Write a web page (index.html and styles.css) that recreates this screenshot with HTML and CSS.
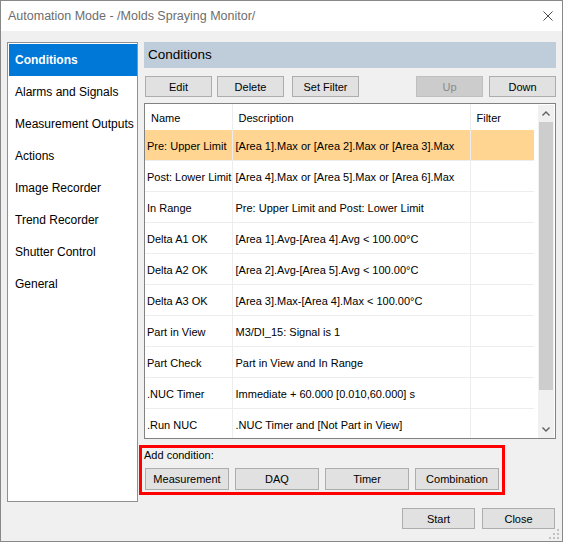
FILE: index.html
```html
<!DOCTYPE html>
<html lang="en">
<head>
    <meta charset="UTF-8">
    <title>Automation Mode - /Molds Spraying Monitor/</title>
    <link rel="stylesheet" href="styles.css">
</head>
<body>
<div class="window">
    <div class="titlebar">
        <span class="title">Automation Mode - /Molds Spraying Monitor/</span>
        <svg class="close" width="10" height="10" viewBox="0 0 10 10">
            <path d="M0.5 0.5 L9.5 9.5 M9.5 0.5 L0.5 9.5" stroke="#4a4a4a" stroke-width="1" fill="none"/>
        </svg>
    </div>

    <div class="main">
        <div class="nav">
            <div class="nav-item selected">Conditions</div>
            <div class="nav-item">Alarms and Signals</div>
            <div class="nav-item">Measurement Outputs</div>
            <div class="nav-item">Actions</div>
            <div class="nav-item">Image Recorder</div>
            <div class="nav-item">Trend Recorder</div>
            <div class="nav-item">Shutter Control</div>
            <div class="nav-item">General</div>
        </div>

        <div class="panel">
            <div class="panel-head">Conditions</div>

            <div class="toolbar">
                <button class="btn">Edit</button>
                <button class="btn btn-delete">Delete</button>
                <button class="btn btn-filter">Set Filter</button>
                <button class="btn btn-up" disabled>Up</button>
                <button class="btn btn-down">Down</button>
            </div>

            <div class="table-box">
                <div class="grid-wrap">
                    <table class="grid">
                        <colgroup>
                            <col class="c-name">
                            <col class="c-desc">
                            <col class="c-filter">
                        </colgroup>
                        <thead>
                            <tr><th>Name</th><th>Description</th><th>Filter</th></tr>
                        </thead>
                        <tbody id="rows"></tbody>
                    </table>
                </div>
                <div class="scrollbar">
                    <div class="sb-arrow">
                        <svg width="8" height="5" viewBox="0 0 8 5"><path d="M0.5 4.5 L4 1 L7.5 4.5" stroke="#606060" stroke-width="1.4" fill="none"/></svg>
                    </div>
                    <div class="sb-thumb"></div>
                    <div class="sb-track"></div>
                    <div class="sb-arrow">
                        <svg width="8" height="5" viewBox="0 0 8 5"><path d="M0.5 0.5 L4 4 L7.5 0.5" stroke="#606060" stroke-width="1.4" fill="none"/></svg>
                    </div>
                </div>
            </div>

            <div class="add">
                <div class="add-label">Add condition:</div>
                <div class="add-buttons">
                    <button class="btn btn-wide">Measurement</button>
                    <button class="btn btn-wide">DAQ</button>
                    <button class="btn btn-wide">Timer</button>
                    <button class="btn btn-wide">Combination</button>
                </div>
            </div>
        </div>
    </div>

    <div class="footer">
        <button class="btn btn-foot">Start</button>
        <button class="btn btn-foot">Close</button>
    </div>

    <svg class="grip" width="11" height="11" viewBox="0 0 11 11">
        <rect x="8" y="0" width="2" height="2" fill="#c2c2c2"/>
        <rect x="4" y="4" width="2" height="2" fill="#c2c2c2"/>
        <rect x="8" y="4" width="2" height="2" fill="#c2c2c2"/>
        <rect x="0" y="8" width="2" height="2" fill="#c2c2c2"/>
        <rect x="4" y="8" width="2" height="2" fill="#c2c2c2"/>
        <rect x="8" y="8" width="2" height="2" fill="#c2c2c2"/>
    </svg>
</div>

<script>
    let conditions = [
        ["Pre: Upper Limit", "[Area 1].Max or [Area 2].Max or [Area 3].Max"],
        ["Post: Lower Limit", "[Area 4].Max or [Area 5].Max or [Area 6].Max"],
        ["In Range", "Pre: Upper Limit and Post: Lower Limit"],
        ["Delta A1 OK", "[Area 1].Avg-[Area 4].Avg < 100.00°C"],
        ["Delta A2 OK", "[Area 2].Avg-[Area 5].Avg < 100.00°C"],
        ["Delta A3 OK", "[Area 3].Max-[Area 4].Max < 100.00°C"],
        ["Part in View", "M3/DI_15: Signal is 1"],
        ["Part Check", "Part in View and In Range"],
        [".NUC Timer", "Immediate + 60.000 [0.010,60.000] s"],
        [".Run NUC", ".NUC Timer and [Not Part in View]"]
    ];

    let tbody = document.getElementById("rows");
    conditions.forEach((c, index) => {
        let row = document.createElement("tr");
        if (index === 0) row.className = "sel";
        row.innerHTML = `<td>${c[0]}</td><td>${c[1].replace("<", "&lt;")}</td><td></td>`;
        tbody.appendChild(row);
    });
</script>
</body>
</html>
```

FILE: styles.css
```css
body {
    margin: 0;
    font-family: "Liberation Sans", Arial, sans-serif;
    font-size: 11px;
    color: #000;
}
.window {
    position: relative;
    width: 563px;
    height: 542px;
    box-sizing: border-box;
    border: 1px solid #888;
    background: #f0f0f0;
    display: flex;
    flex-direction: column;
}
.titlebar {
    height: 30px;
    background: #fff;
    display: flex;
    align-items: center;
    justify-content: space-between;
    padding: 0 9px 0 7px;
}
.title {
    font-size: 12.5px;
    color: #6d6d6d;
}
.main {
    display: flex;
    gap: 6px;
    padding: 11px 0 0 6px;
}
.nav {
    width: 131px;
    height: 460px;
    box-sizing: border-box;
    border: 1px solid #8f8f94;
    background: #fff;
    padding: 1px 0 0 1px;
    font-size: 12px;
}
.nav-item {
    height: 32px;
    line-height: 32px;
    padding-left: 6px;
    white-space: nowrap;
}
.nav-item.selected {
    background: #0078d7;
    color: #fff;
    font-weight: bold;
}
.panel {
    width: 412px;
    display: flex;
    flex-direction: column;
}
.panel-head {
    height: 26px;
    line-height: 26px;
    background: #bfcddb;
    font-size: 13.5px;
    padding-left: 4px;
}
.btn {
    height: 21px;
    width: 67px;
    box-sizing: border-box;
    border: 1px solid #adadad;
    background: #e1e1e1;
    font-family: inherit;
    font-size: 11px;
    color: #000;
    padding: 0;
}
.btn:disabled {
    background: #cccccc;
    border-color: #bfbfbf;
    color: #8a8a8a;
}
.toolbar {
    display: flex;
    margin-top: 8px;
    padding-left: 1px;
}
.btn-delete {
    margin-left: 5px;
}
.btn-filter {
    margin-left: 8px;
}
.btn-up {
    margin-left: auto;
}
.btn-down {
    margin-left: 6px;
}
.table-box {
    margin-top: 6px;
    height: 336px;
    box-sizing: border-box;
    border: 1px solid #828282;
    background: #fff;
    display: flex;
    padding-right: 1px;
}
.grid-wrap {
    width: 389px;
    overflow: hidden;
}
.grid {
    border-collapse: collapse;
    table-layout: fixed;
    width: 389px;
}
.c-name {
    width: 87px;
}
.c-desc {
    width: 238px;
}
.c-filter {
    width: 64px;
}
.grid th {
    height: 25px;
    padding: 1px 0 0 6px;
    text-align: left;
    font-weight: normal;
    border-right: 1px solid #ededed;
}
.grid td {
    height: 29px;
    padding: 1px 0 0 3px;
    white-space: nowrap;
    overflow: hidden;
    border-right: 1px solid #ededed;
    border-bottom: 1px solid #ededed;
}
.grid td:first-child {
    padding-left: 2px;
}
.grid th:last-child,
.grid td:last-child {
    border-right: none;
}
.grid tr.sel td {
    background: #ffd591;
}
.scrollbar {
    width: 16px;
    margin: 1px 0 0 4px;
    background: #f0f0f0;
    display: flex;
    flex-direction: column;
}
.sb-arrow {
    height: 17px;
    display: flex;
    align-items: center;
    justify-content: center;
}
.sb-thumb {
    height: 268px;
    margin: 0 1px;
    background: #cdcdcd;
}
.sb-track {
    flex: 1;
}
.add {
    position: relative;
    margin-top: 10px;
}
.add::after {
    content: "";
    position: absolute;
    left: -5px;
    top: -4px;
    width: 366px;
    height: 50px;
    box-sizing: border-box;
    border: 3px solid #ff0000;
}
.add-label {
    line-height: 13px;
}
.add-buttons {
    display: flex;
    gap: 6px;
    margin-top: 6px;
    padding-left: 1px;
}
.btn-wide {
    width: 84px;
    height: 22px;
}
.footer {
    display: flex;
    justify-content: flex-end;
    gap: 7px;
    margin-top: 6px;
    padding-right: 7px;
}
.btn-foot {
    width: 73px;
}
.grip {
    position: absolute;
    right: 2px;
    bottom: 1px;
}
```
